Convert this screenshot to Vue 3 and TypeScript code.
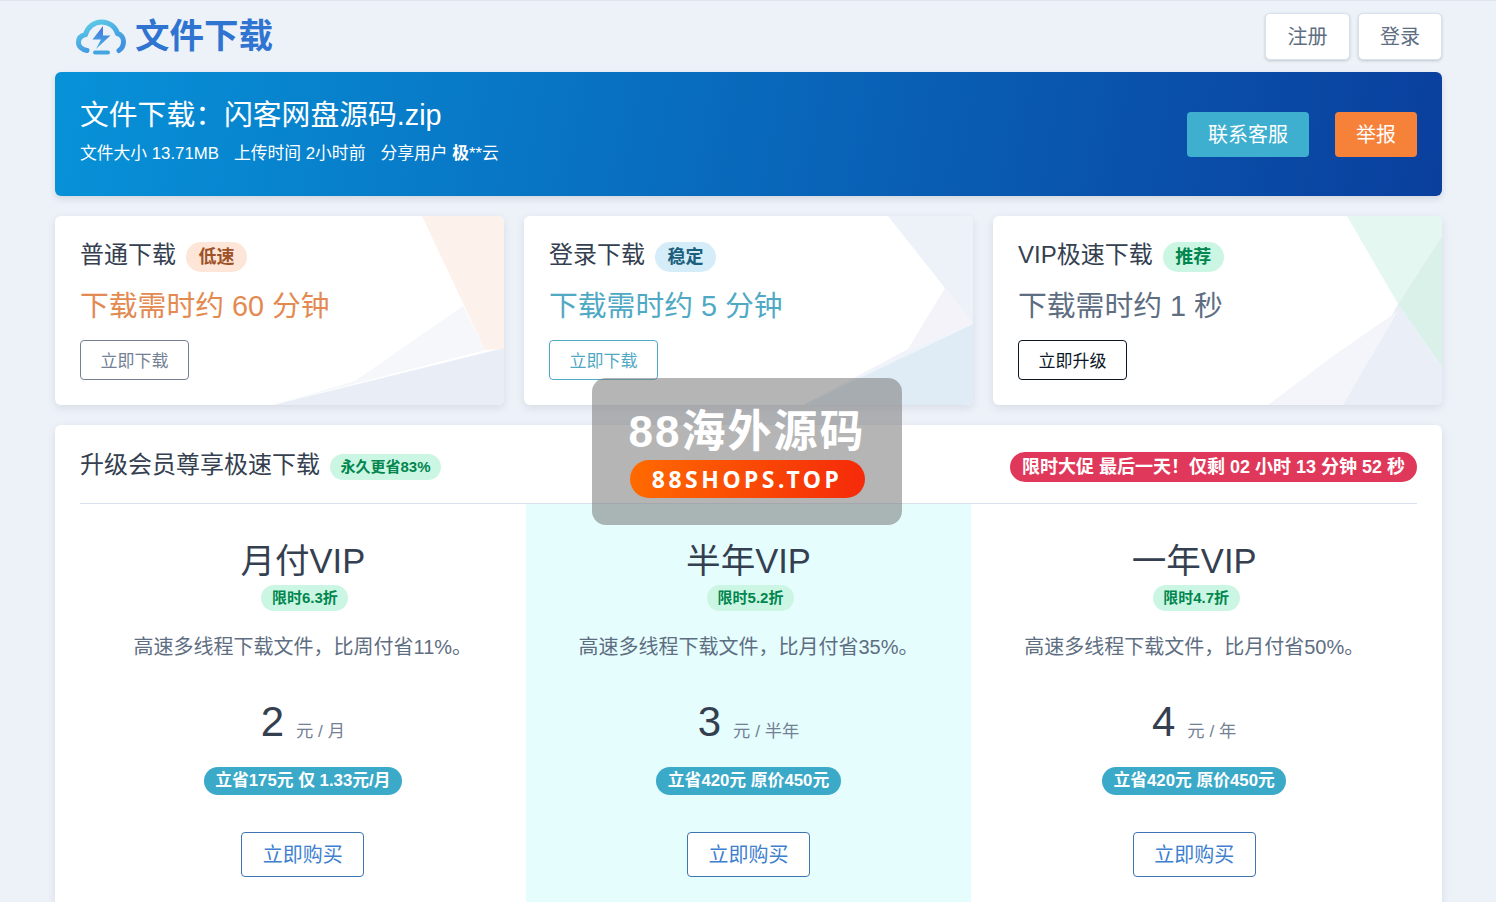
<script setup lang="ts">
interface Tier {
  name: string;
  tag: string;
  tagClass: string;
  time: string;
  timeClass: string;
  btn: string;
  btnClass: string;
  polys: { points: string; fill: string }[];
}

interface Plan {
  name: string;
  off: string;
  desc: string;
  price: string;
  unit: string;
  save: string;
  featured?: boolean;
}

const tiers: Tier[] = [
  {
    name: '普通下载',
    tag: '低速',
    tagClass: 'soft-warning',
    time: '下载需时约 60 分钟',
    timeClass: 'warning',
    btn: '立即下载',
    btnClass: 'btn-gray',
    polys: [
      { points: '367,0 449,0 449,133 430,134', fill: '#fdf2eb' },
      { points: '408,90 430,134 218,189 300,165', fill: '#f5f7fb' },
      { points: '218,189 449,132 449,189', fill: '#e9eef6' },
    ],
  },
  {
    name: '登录下载',
    tag: '稳定',
    tagClass: 'soft-info',
    time: '下载需时约 5 分钟',
    timeClass: 'info',
    btn: '立即下载',
    btnClass: 'btn-info',
    polys: [
      { points: '364,0 449,0 449,108 421,72', fill: '#edf1f8' },
      { points: '421,72 449,108 384,133', fill: '#f3f3f9' },
      { points: '384,133 449,108 279,189', fill: '#f0f4fa' },
      { points: '279,189 449,108 449,189', fill: '#dfecf5' },
    ],
  },
  {
    name: 'VIP极速下载',
    tag: '推荐',
    tagClass: 'soft-success',
    time: '下载需时约 1 秒',
    timeClass: 'gray',
    btn: '立即升级',
    btnClass: 'btn-dark',
    polys: [
      { points: '354,0 449,0 449,20 405,88', fill: '#e4f7f0' },
      { points: '449,20 449,151 405,88', fill: '#d9f1e9' },
      { points: '405,88 449,151 449,189 350,189', fill: '#e9eef7' },
      { points: '275,189 340,140 405,95 350,189', fill: '#f3f5fa' },
    ],
  },
];

const plans: Plan[] = [
  { name: '月付VIP', off: '限时6.3折', desc: '高速多线程下载文件，比周付省11%。', price: '2', unit: '元 / 月', save: '立省175元 仅 1.33元/月' },
  { name: '半年VIP', off: '限时5.2折', desc: '高速多线程下载文件，比月付省35%。', price: '3', unit: '元 / 半年', save: '立省420元 原价450元', featured: true },
  { name: '一年VIP', off: '限时4.7折', desc: '高速多线程下载文件，比月付省50%。', price: '4', unit: '元 / 年', save: '立省420元 原价450元' },
];
</script>

<template>
  <div class="page">
    <header class="topbar">
      <div class="logo">
        <svg width="50" height="36" viewBox="0 0 50 36" fill="none">
          <defs>
            <linearGradient id="cloudGrad" x1="0" y1="0" x2="0.6" y2="1">
              <stop offset="0" stop-color="#5fd0e6" />
              <stop offset="1" stop-color="#3f93e0" />
            </linearGradient>
            <linearGradient id="boltGrad" x1="0" y1="0" x2="0" y2="1">
              <stop offset="0" stop-color="#4a6fdc" />
              <stop offset="1" stop-color="#45b4e4" />
            </linearGradient>
          </defs>
          <path d="M11 31.500C6 30.500 2.500 27.500 2.500 23.500C2.500 19.500 5 16.500 9.500 15.500C11.500 8 18 3 25.500 3C33.500 3 39.500 8 41.500 14.500C45.500 15.500 47.500 19 47.500 22.500C47.500 26.500 46 29.500 43 31.500" stroke="url(#cloudGrad)" stroke-width="5" stroke-linecap="round" />
          <path d="M27 7L16.500 20.500H25L20 30L34.500 16.500H27Z" fill="url(#boltGrad)" />
          <rect x="17" y="31.500" width="17" height="4" rx="2" fill="#45a5e2" />
        </svg>
        <span class="logo-text">文件下载</span>
      </div>
      <div class="auth">
        <button class="auth-btn reg">注册</button>
        <button class="auth-btn">登录</button>
      </div>
    </header>

    <section class="banner">
      <div>
        <h1>文件下载：闪客网盘源码.zip</h1>
        <div class="meta">
          <span>文件大小 13.71MB</span>
          <span>上传时间 2小时前</span>
          <span>分享用户 <b>极</b>**云</span>
        </div>
      </div>
      <div class="banner-actions">
        <button class="solid contact">联系客服</button>
        <button class="solid report">举报</button>
      </div>
    </section>

    <section class="tiers">
      <div class="tier" v-for="t in tiers" :key="t.name">
        <svg class="tier-bg" viewBox="0 0 449 189" preserveAspectRatio="none">
          <polygon v-for="(p, i) in t.polys" :key="i" :points="p.points" :fill="p.fill" />
        </svg>
        <div class="tier-body">
          <div class="tier-title">
            {{ t.name }}<span class="badge" :class="t.tagClass">{{ t.tag }}</span>
          </div>
          <div class="tier-time" :class="t.timeClass">{{ t.time }}</div>
          <button class="tier-btn" :class="t.btnClass">{{ t.btn }}</button>
        </div>
      </div>
    </section>

    <section class="pricing">
      <div class="pricing-head">
        <div class="pricing-title">
          升级会员尊享极速下载<span class="small-badge soft-success">永久更省83%</span>
        </div>
        <div class="promo">限时大促 最后一天！仅剩 02 小时 13 分钟 52 秒</div>
      </div>
      <div class="plans">
        <div class="plan" v-for="p in plans" :key="p.name" :class="{ featured: p.featured }">
          <div class="plan-name">{{ p.name }}</div>
          <span class="small-badge soft-success off">{{ p.off }}</span>
          <p class="plan-desc">{{ p.desc }}</p>
          <div class="plan-price">
            <span class="num">{{ p.price }}</span><span class="unit">{{ p.unit }}</span>
          </div>
          <span class="save">{{ p.save }}</span>
          <button class="buy">立即购买</button>
        </div>
      </div>
    </section>

    <div class="watermark">
      <div class="wm-title">88海外源码</div>
      <div class="wm-pill">88SHOPS.TOP</div>
    </div>
  </div>
</template>

<style>
html,
body {
  margin: 0;
  background: #edf2f9;
  overflow: hidden;
}
</style>

<style scoped>
.page {
  position: relative;
  height: 902px;
  overflow: hidden;
  padding: 0 54px 0 55px;
  border-top: 1px solid #dfe5ee;
  background: #edf2f9;
  color: #344050;
  font-family: "Liberation Sans", "Noto Sans CJK SC", sans-serif;
  box-sizing: border-box;
}

button {
  font-family: inherit;
  cursor: pointer;
}

.topbar {
  height: 71px;
  display: flex;
  justify-content: space-between;
  align-items: center;
}

.logo {
  display: flex;
  align-items: center;
  gap: 9px;
  padding-left: 21px;
}

.logo-text {
  margin-top: -7px;
  font-size: 34.5px;
  font-weight: 700;
  color: #2f74d0;
}

.auth {
  display: flex;
  gap: 8px;
}

.auth-btn {
  width: 84px;
  height: 47px;
  padding: 0 0 2px;
  font-size: 20px;
  color: #5e6e82;
  background: #fff;
  border: 1px solid #d8e2ef;
  border-radius: 5px;
  box-shadow: 0 1px 3px rgba(0, 0, 0, 0.18);
}

.auth-btn.reg {
  width: 85px;
}

.banner {
  height: 124px;
  padding: 0 25px;
  box-sizing: border-box;
  display: flex;
  justify-content: space-between;
  align-items: center;
  color: #fff;
  border-radius: 6px;
  background: linear-gradient(100deg, #0792d8, #0a3f9e);
  box-shadow: 0 3px 6px rgba(65, 69, 88, 0.15);
}

.banner h1 {
  margin: -9px 0 6px;
  font-size: 28.8px;
  font-weight: 400;
  line-height: 42px;
}

.meta {
  display: flex;
  gap: 15px;
  font-size: 16.8px;
  line-height: 24px;
}

.banner-actions {
  display: flex;
  gap: 26px;
}

.solid {
  height: 45px;
  padding: 0 0 2px;
  font-size: 20px;
  color: #fff;
  border: none;
  border-radius: 4px;
}

.contact {
  width: 122px;
  background: #3fafcf;
}

.report {
  width: 82px;
  background: #f6823a;
}

.tiers {
  display: grid;
  grid-template-columns: repeat(3, 449px);
  justify-content: space-between;
  margin-top: 20px;
}

.tier {
  position: relative;
  height: 189px;
  background: #fff;
  border-radius: 6px;
  overflow: hidden;
  box-shadow: 0 3px 8px rgba(65, 69, 88, 0.12);
}

.tier-bg {
  position: absolute;
  inset: 0;
  width: 100%;
  height: 100%;
}

.tier-body {
  position: relative;
  padding: 22px 25px 0;
}

.tier-title {
  display: flex;
  align-items: center;
  font-size: 24px;
  line-height: 34px;
}

.badge {
  margin: 4px 0 0 10px;
  padding: 0 12.500px;
  font-size: 18px;
  font-weight: 700;
  line-height: 30px;
  border-radius: 15px;
}

.soft-warning {
  background: #fde6d8;
  color: #9d5228;
}

.soft-info {
  background: #d4edf8;
  color: #1b5f7d;
}

.soft-success {
  background: #ccf6e4;
  color: #00864e;
}

.tier-time {
  margin-top: 13px;
  font-size: 28.8px;
  line-height: 42px;
}

.warning {
  color: #e38a52;
}

.info {
  color: #4fa9c4;
}

.gray {
  color: #5e6e82;
}

.tier-btn {
  display: block;
  width: 109px;
  height: 40px;
  margin-top: 13px;
  padding: 0 0 2px;
  font-size: 17px;
  background: #fff;
  border: 1px solid;
  border-radius: 4px;
}

.btn-gray {
  color: #748194;
  border-color: #748194;
}

.btn-info {
  color: #4fa9c4;
  border-color: #4fa9c4;
}

.btn-dark {
  color: #0b1727;
  border-color: #0b1727;
}

.pricing {
  margin-top: 20px;
  height: 600px;
  padding: 0 25px;
  background: #fff;
  border-radius: 6px;
  box-shadow: 0 3px 8px rgba(65, 69, 88, 0.12);
}

.pricing-head {
  height: 78px;
  display: flex;
  justify-content: space-between;
  align-items: center;
  border-bottom: 1px solid #d8e2ef;
}

.pricing-title {
  display: flex;
  align-items: center;
  margin-top: -4px;
  font-size: 24px;
}

.small-badge {
  display: inline-block;
  font-size: 15px;
  font-weight: 700;
  line-height: 26px;
  padding: 0 10.500px;
  border-radius: 13px;
}

.pricing-title .small-badge {
  margin: 10px 0 0 10px;
}

.off {
  margin-left: 4px;
}

.promo {
  margin-top: 6px;
  padding: 0 12px;
  height: 30px;
  line-height: 30px;
  color: #fff;
  font-size: 18px;
  font-weight: 700;
  background: #e0385a;
  border-radius: 15px;
}

.plans {
  display: grid;
  grid-template-columns: repeat(3, 1fr);
}

.plan {
  display: flex;
  flex-direction: column;
  align-items: center;
  height: 420px;
  padding-top: 33px;
  box-sizing: border-box;
}

.featured {
  background: #e5fdfd;
}

.plan-name {
  font-size: 34.56px;
  line-height: 48px;
}

.plan-desc {
  margin: 21px 0 0;
  font-size: 20px;
  line-height: 30px;
  color: #5e6e82;
}

.plan-price {
  margin-top: 36px;
  display: flex;
  align-items: flex-end;
  gap: 12px;
  height: 48px;
}

.num {
  font-size: 42px;
  line-height: 48px;
}

.unit {
  font-size: 17.300px;
  line-height: 30px;
  color: #748194;
}

.save {
  margin-top: 21px;
  padding: 0 11.500px;
  height: 28px;
  line-height: 28px;
  font-size: 16.800px;
  font-weight: 700;
  color: #fff;
  background: #3ba9c8;
  border-radius: 14px;
}

.buy {
  margin-top: 37px;
  width: 123px;
  height: 45px;
  padding: 0 0 2px;
  font-size: 20px;
  color: #3f7fcf;
  background: #fff;
  border: 1px solid #3e74b0;
  border-radius: 4px;
}

.watermark {
  position: absolute;
  left: 592px;
  top: 377px;
  width: 310px;
  height: 147px;
  display: flex;
  flex-direction: column;
  align-items: center;
  background: rgba(120, 120, 120, 0.55);
  border-radius: 14px;
}

.wm-title {
  margin-top: 26px;
  font-size: 44px;
  line-height: 56px;
  letter-spacing: 2px;
  font-weight: 700;
  color: #fff;
}

.wm-pill {
  width: 235px;
  height: 38px;
  text-align: center;
  line-height: 38px;
  font-family: "Noto Sans", sans-serif;
  font-size: 23px;
  font-weight: 700;
  letter-spacing: 3.500px;
  color: #fff;
  background: linear-gradient(90deg, #ff6a00, #f52a0a);
  border-radius: 19px;
}
</style>
